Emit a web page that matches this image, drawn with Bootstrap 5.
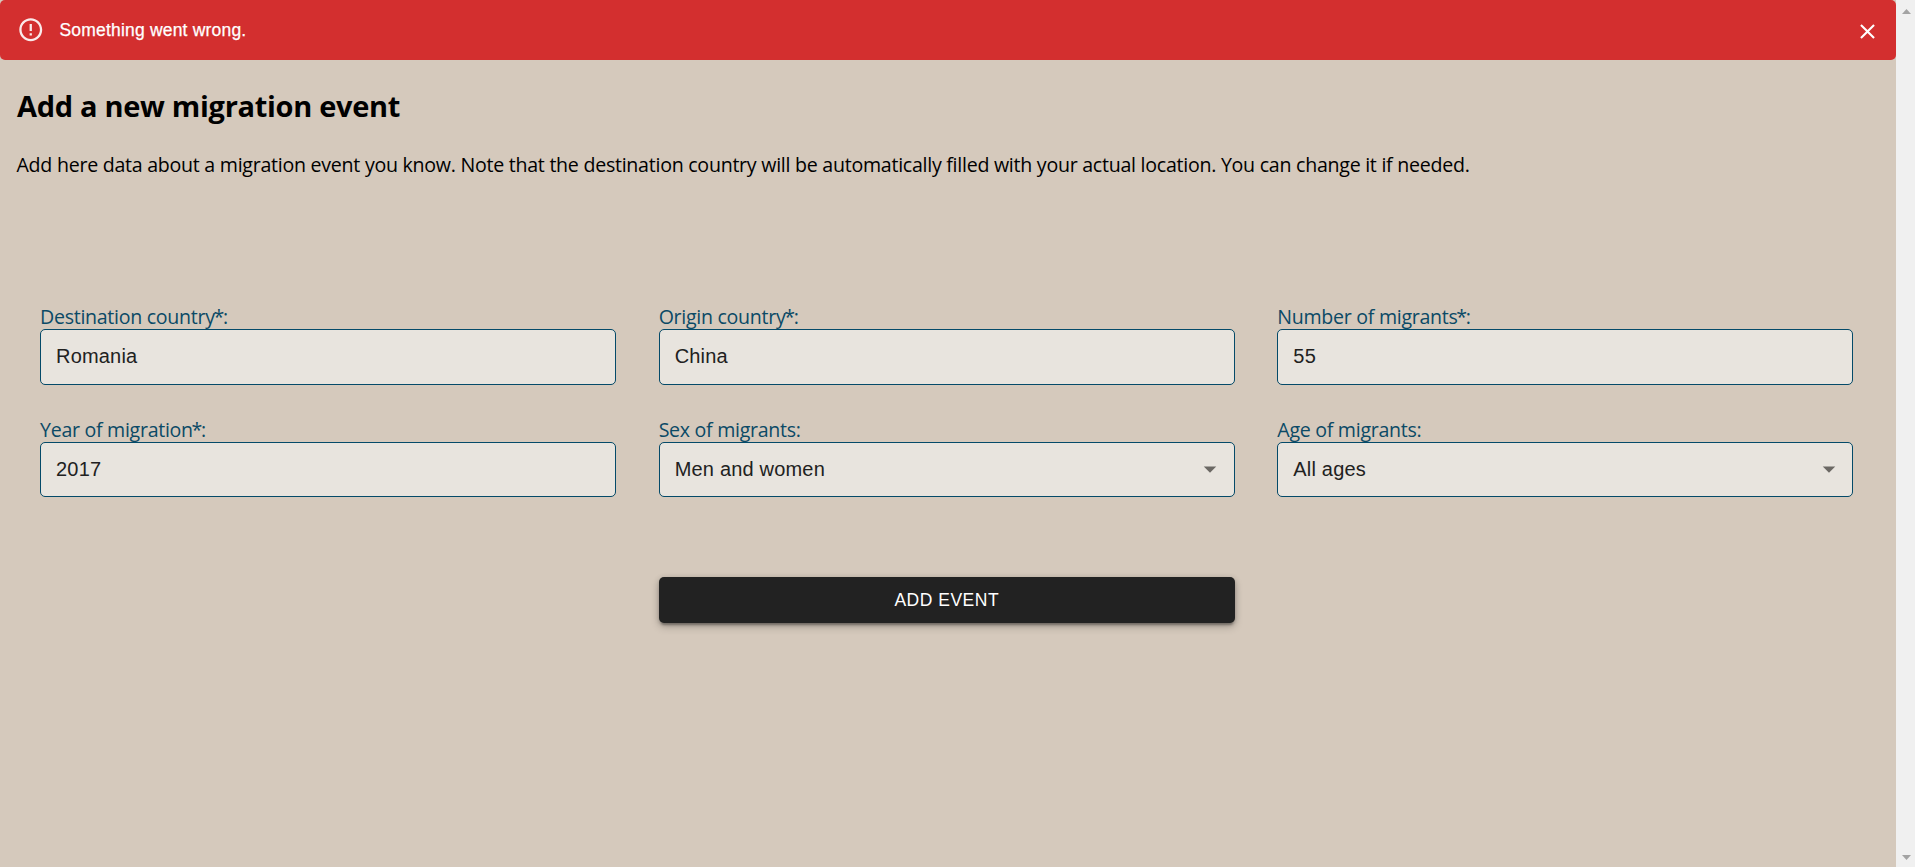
<!DOCTYPE html>
<html lang="en">
<head>
<meta charset="utf-8">
<title>Add a new migration event</title>
<link href="https://cdn.jsdelivr.net/npm/bootstrap@5.3.0/dist/css/bootstrap.min.css" rel="stylesheet">
<style>
  body { background: #d5c9bc; color: #000; font-family: "Open Sans", "Noto Sans", sans-serif; }
  .notice { background: #d32f2f; border-radius: 5px; height: 60px; padding: 0 15px 0 17px;
    font: 17.5px/25px "Liberation Sans", Arial, sans-serif; letter-spacing: .19px; -webkit-text-stroke: .25px #fff; }
  .notice span { margin-left: 15px; }
  .notice button { width: 25px; height: 25px; margin: 3px 1px 0 0; }
  .page-title { font-size: 29px; font-weight: 700; line-height: 40px; margin: 26px 16px 0 17px; letter-spacing: -.3px; }
  .intro { font-size: 19.6px; line-height: 28px; margin: 25px 16px 0 16.5px; letter-spacing: -.265px; }
  .event-form { padding: 127px 42.5px 0 40px; }
  .event-form .row { --bs-gutter-x: 42.5px; --bs-gutter-y: 0; }
  .field-label { color: #0b4a66; font-size: 19.6px; line-height: 21px; height: 23px; letter-spacing: -.29px; }
  .req { margin: 0 -1px 0 -1.3px; }
  .field-box, .field-box:focus { height: 56px; border: 1px solid #044a69; border-radius: 5px; background-color: #e8e4de; color: #212121;
    font: 20px/28px "Liberation Sans", Arial, sans-serif; letter-spacing: .19px; padding: 0 15px 2px; box-shadow: none; }
  .field-box.short { height: 55px; }
  input.field-box.short { padding-bottom: 1px; }
  .select-wrap svg { position: absolute; right: 9.5px; top: 11.5px; pointer-events: none; }
  .second { margin-top: 34px; }
  .btn-event, .btn-event:hover { background: #222; color: #fff; height: 46px; border: 0; border-radius: 5px;
    font: 17.5px/30px "Liberation Sans", Arial, sans-serif; letter-spacing: .5px; margin-top: 80px;
    box-shadow: 0 4px 2px -2px rgba(0,0,0,.2), 0 2px 3px rgba(0,0,0,.14), 0 1px 6px rgba(0,0,0,.12), 0 4px 8px rgba(0,0,0,.2); }
  .scroll-strip { width: 19px; background: #f0f0f0; padding: 9px 0 7px 6px; }
</style>
</head>
<body>
<div class="d-flex vh-100 overflow-hidden">
  <main class="flex-grow-1">
    <div class="notice d-flex align-items-center text-white" role="alert">
      <svg width="27.5" height="27.5" viewBox="0 0 24 24" fill="#fff" opacity=".9"><path d="M11 15h2v2h-2zm0-8h2v6h-2zm.99-5C6.47 2 2 6.48 2 12s4.47 10 9.99 10C17.52 22 22 17.52 22 12S17.52 2 11.99 2zM12 20c-4.42 0-8-3.58-8-8s3.58-8 8-8 8 3.58 8 8-3.58 8-8 8z"/></svg>
      <span class="flex-grow-1">Something went wrong.</span>
      <button type="button" class="btn p-0 border-0 d-flex" aria-label="Close"><svg width="25" height="25" viewBox="0 0 24 24" fill="#fff"><path d="M19 6.41L17.59 5 12 10.59 6.41 5 5 6.41 10.59 12 5 17.59 6.41 19 12 13.41 17.59 19 19 17.59 13.41 12z"/></svg></button>
    </div>
    <h1 class="page-title">Add a new migration event</h1>
    <p class="intro text-nowrap">Add here data about a migration event you know. Note that the destination country will be automatically filled with your actual location. You can change it if needed.</p>
    <form class="event-form">
      <div class="row">
        <div class="col-4"><label class="field-label d-block" for="dest">Destination country<span class="req">*</span>:</label><input id="dest" class="form-control field-box" value="Romania"></div>
        <div class="col-4"><label class="field-label d-block" for="orig">Origin country<span class="req">*</span>:</label><input id="orig" class="form-control field-box" value="China"></div>
        <div class="col-4"><label class="field-label d-block" for="num">Number of migrants<span class="req">*</span>:</label><input id="num" class="form-control field-box" value="55"></div>
      </div>
      <div class="row second">
        <div class="col-4"><label class="field-label d-block" for="year">Year of migration<span class="req">*</span>:</label><input id="year" class="form-control field-box short" value="2017"></div>
        <div class="col-4"><div class="field-label">Sex of migrants:</div>
          <div class="select-wrap position-relative"><div class="form-control field-box short d-flex align-items-center">Men and women</div>
          <svg width="30" height="30" viewBox="0 0 24 24" fill="#6b6864"><path d="M7 10l5 5 5-5z"/></svg></div></div>
        <div class="col-4"><div class="field-label">Age of migrants:</div>
          <div class="select-wrap position-relative"><div class="form-control field-box short d-flex align-items-center">All ages</div>
          <svg width="30" height="30" viewBox="0 0 24 24" fill="#6b6864"><path d="M7 10l5 5 5-5z"/></svg></div></div>
      </div>
      <div class="row justify-content-center">
        <div class="col-4"><button type="button" class="btn btn-event w-100">ADD EVENT</button></div>
      </div>
    </form>
  </main>
  <div class="scroll-strip flex-shrink-0 d-flex flex-column justify-content-between" aria-hidden="true">
    <svg width="9" height="5" viewBox="0 0 9 5" fill="#a3a3a3"><path d="M4.5 0L9 5H0z"/></svg>
    <svg width="9" height="5" viewBox="0 0 9 5" fill="#a3a3a3"><path d="M4.5 5L9 0H0z"/></svg>
  </div>
</div>
<script src="https://cdn.jsdelivr.net/npm/bootstrap@5.3.0/dist/js/bootstrap.bundle.min.js"></script>
</body>
</html>
